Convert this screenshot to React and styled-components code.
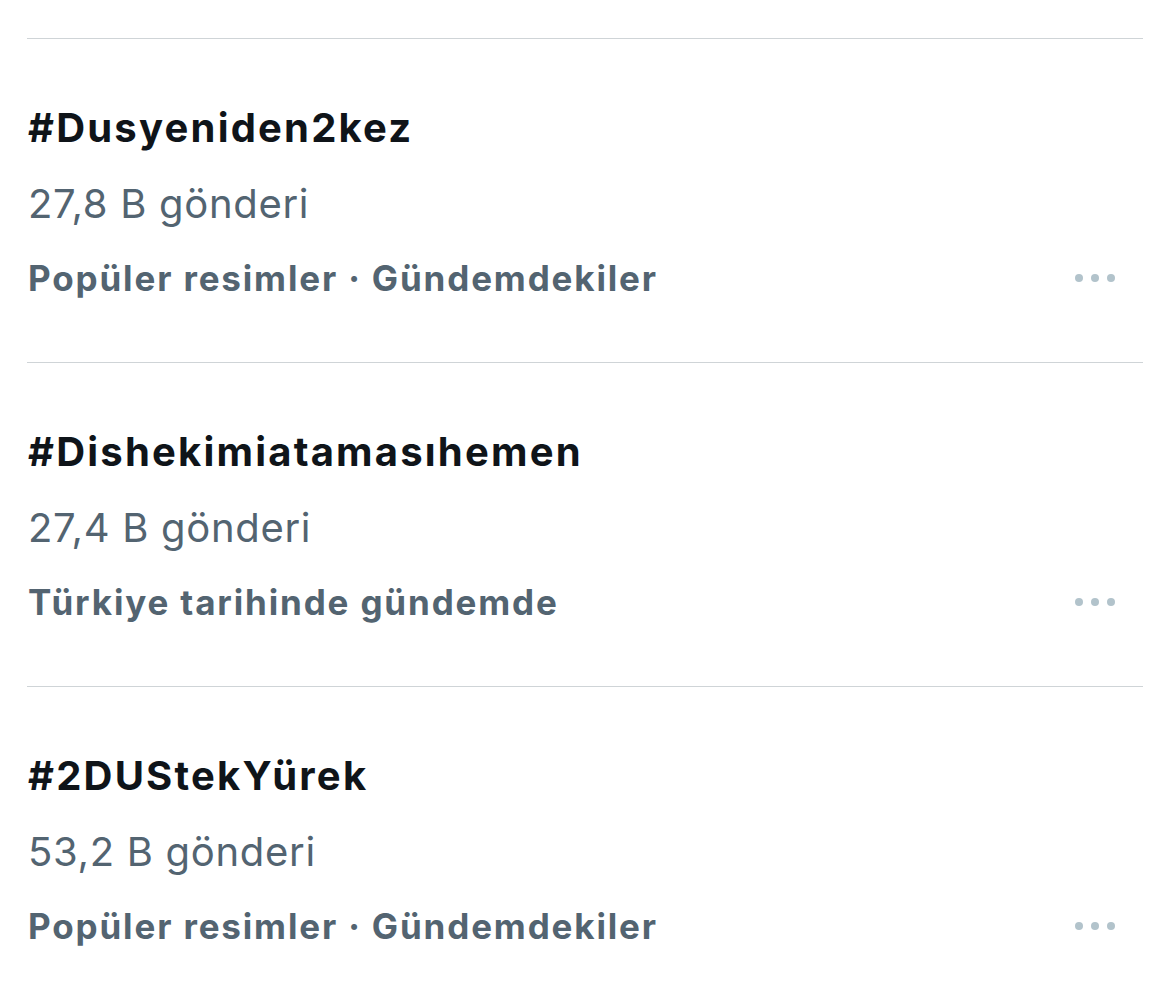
import * as React from "react";
import styled, { createGlobalStyle } from "styled-components";

const trends = [
    { tag: "#Dusyeniden2kez", count: "27,8 B gönderi", context: "Popüler resimler · Gündemdekiler" },
    { tag: "#Dishekimiatamasıhemen", count: "27,4 B gönderi", context: "Türkiye tarihinde gündemde" },
    { tag: "#2DUStekYürek", count: "53,2 B gönderi", context: "Popüler resimler · Gündemdekiler" },
];

export default function App() {
    return <>
        <GlobalStyle />
        <Page>
            <TrendList>
                {trends.map((t) => <TrendItem key={t.tag}>
                    <Title>{t.tag}</Title>
                    <Count>{t.count}</Count>
                    <ContextRow>
                        <Context>{t.context}</Context>
                        <MoreButton aria-label="Daha fazla">
                            <Dot /><Dot /><Dot />
                        </MoreButton>
                    </ContextRow>
                </TrendItem>)}
            </TrendList>
        </Page>
    </>
}

const GlobalStyle = createGlobalStyle`
body{
    margin:0;
    background:#ffffff;
    font-family:Inter, "Noto Sans", "DejaVu Sans", sans-serif;
}
`

const Page = styled.div`
width:1170px;
height:1002px;
padding:38px 27px 0 27px;
box-sizing:border-box;
overflow:hidden;
`

const TrendList = styled.div`
display:flex;
flex-direction:column;
`

const TrendItem = styled.div`
border-top:1px solid #cfd4d7;
padding:51px 0 48px 1px;
display:flex;
flex-direction:column;
`

const Title = styled.div`
font-size:40px;
font-weight:700;
line-height:76px;
color:#0f1419;
letter-spacing:2.2px;
`

const Count = styled.div`
font-size:40px;
font-weight:400;
line-height:76px;
color:#536471;
letter-spacing:0.7px;
`

const ContextRow = styled.div`
height:72px;
display:flex;
align-items:center;
justify-content:space-between;
`

const Context = styled.div`
font-size:35px;
font-weight:700;
color:#536471;
letter-spacing:1.85px;
`

const MoreButton = styled.div`
display:flex;
gap:8px;
align-items:center;
margin-right:28px;
`

const Dot = styled.span`
width:8px;
height:8px;
border-radius:50%;
background:#b2c3cb;
`
